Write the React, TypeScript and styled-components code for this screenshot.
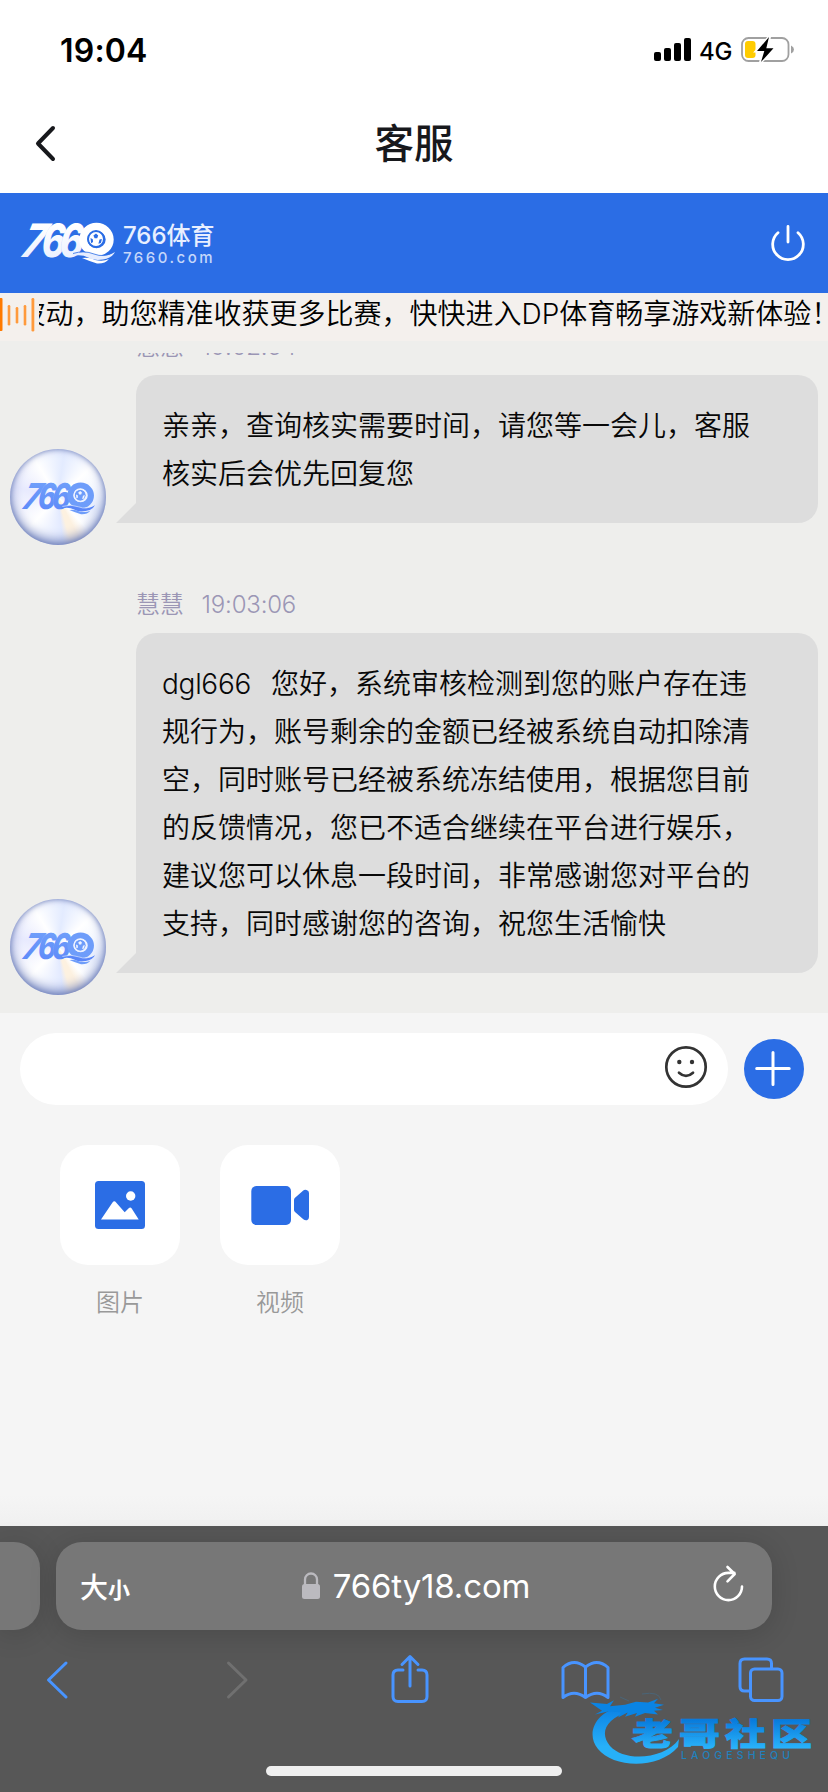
import styled, { createGlobalStyle } from "styled-components";

const noticeText = "波动，助您精准收获更多比赛，快快进入DP体育畅享游戏新体验！";

const messages = [
  {
    id: 1,
    name: "慧慧",
    time: "19:02:54",
    account: "",
    lines: ["亲亲，查询核实需要时间，请您等一会儿，客服", "核实后会优先回复您"],
  },
  {
    id: 2,
    name: "慧慧",
    time: "19:03:06",
    account: "dgl666",
    lines: [
      "您好，系统审核检测到您的账户存在违",
      "规行为，账号剩余的金额已经被系统自动扣除清",
      "空，同时账号已经被系统冻结使用，根据您目前",
      "的反馈情况，您已不适合继续在平台进行娱乐，",
      "建议您可以休息一段时间，非常感谢您对平台的",
      "支持，同时感谢您的咨询，祝您生活愉快",
    ],
  },
];

const BrandMark = ({ id, width, colors, hole }: { id: string; width: number; colors: [string, string]; hole: string }) => (
  <svg width={width} height={(width * 42) / 94} viewBox="0 0 94 42" overflow="visible">
    <defs>
      <linearGradient id={id} x1="0" y1="0" x2="0" y2="1">
        <stop offset="0.2" stopColor={colors[0]} />
        <stop offset="1" stopColor={colors[1]} />
      </linearGradient>
    </defs>
    <g
      fill={`url(#${id})`}
      stroke={hole}
      strokeWidth="0.600"
      strokeOpacity="0.4"
      paintOrder="stroke"
      fontFamily="Inter, sans-serif"
      fontWeight="800"
      fontSize="46"
    >
      <text transform="translate(-3.500 35) skewX(-22) scale(0.84 1)">7</text>
      <text transform="translate(18.500 35) skewX(-11) scale(0.78 1)">6</text>
      <text transform="translate(36.500 35) skewX(-11) scale(0.78 1)">6</text>
    </g>
    <ellipse cx="75.500" cy="17.500" rx="13.200" ry="12.700" fill="none" stroke={colors[0]} strokeWidth="8" />
    <circle cx="75" cy="17" r="7" fill={colors[0]} />
    <path d="M75 11.500l2.200 2-1 2.700h-2.600l-1.200-2.600zM69.500 16l2.300 1.200.3 2.800-2 1.200zM78.500 17.600l2.400-.7-1 4.200-2.500.7z" fill={hole} />
    <circle cx="75" cy="17" r="8.200" fill="none" stroke={hole} strokeWidth="1.400" />
    <path d="M51 32q10-4 22 0t21-2q-3 6-12 7.500t-15-2-16-1.500z" fill={colors[1]} />
    <path d="M61 36q8-1 13 2 8 2 14-1-4 5-12 4.500-8-2.500-15-5.500z" fill={colors[0]} />
    <path d="M52 31.500q11-3.500 21 .5t19-2" fill="none" stroke={hole} strokeWidth="0.800" />
  </svg>
);

const StatusIcons = () => (
  <StatusGroup>
    <svg width="38" height="24" viewBox="0 0 38 24">
      <rect x="0" y="14" width="7" height="9" rx="2" />
      <rect x="10" y="10" width="7" height="13" rx="2" />
      <rect x="20" y="5" width="7" height="18" rx="2" />
      <rect x="30" y="0" width="7" height="23" rx="2" />
    </svg>
    <Network>4G</Network>
    <svg width="54" height="28" viewBox="0 0 54 28">
      <rect x="1" y="2" width="46.500" height="23" rx="6.500" fill="none" stroke="#a0a0a0" strokeWidth="1.800" />
      <path d="M50 9.500q3 1.500 3 4t-3 4z" fill="#a0a0a0" />
      <rect x="4" y="5" width="10.500" height="17" rx="3" fill="#fc0" />
      <path d="M28.500.800L15.500 15h7.300L19.500 26.500 33 12.300h-7.200z" stroke="#fff" strokeWidth="3" />
      <path d="M28 1L16 15h7.300L20 26 32.500 12.300h-7.200z" />
    </svg>
  </StatusGroup>
);

const App = () => (
  <Screen>
    <GlobalStyle />
    <StatusBar>
      <Clock>19:04</Clock>
      <StatusIcons />
    </StatusBar>
    <TitleBar>
      <svg width="40" height="40" viewBox="0 0 40 40" fill="none" stroke="#17181c" strokeWidth="4" strokeLinecap="round" strokeLinejoin="round">
        <path d="M27 4L12 19.500 27 35" />
      </svg>
      <Title>客服</Title>
    </TitleBar>

    <BrandBar>
      <BrandMark id="brandWhite" width={94} colors={["#ffffff", "#e6edff"]} hole="#2b6de5" />
      <BrandNames>
        <BrandName>766体育</BrandName>
        <BrandDomain>7660.com</BrandDomain>
      </BrandNames>
      <svg width="40" height="40" viewBox="0 0 40 40" fill="none" stroke="#fff" strokeWidth="2.800" strokeLinecap="round">
        <path d="M20 3.500V19M10 9.700a15.300 15.300 0 1 0 20 0" />
      </svg>
    </BrandBar>

    <Notice>
      <svg width="39" height="48" viewBox="0 0 39 48" fill="#ff9a3c">
        <rect x="-1" y="5" width="3.500" height="33" rx="1" fill="#ff7a00" />
        <rect x="7.700" y="12" width="2.600" height="20.500" rx="1.300" />
        <rect x="15.700" y="14" width="2.600" height="16.500" rx="1.300" />
        <rect x="23.700" y="12" width="2.600" height="20.500" rx="1.300" />
        <rect x="31.500" y="5" width="2.800" height="33.500" rx="1.300" />
      </svg>
      <NoticeViewport>
        <NoticeText>{noticeText}</NoticeText>
      </NoticeViewport>
    </Notice>

    <ChatArea>
      <MessageList>
        {messages.map((message) => (
          <Message key={message.id}>
            <Avatar>
              <BrandMark id={`brandBlue${message.id}`} width={73} colors={["#6e9dfa", "#5a86f8"]} hole="#eef3ff" />
            </Avatar>
            <MessageBody>
              <Meta>
                <span>{message.name}</span>
                <span>{message.time}</span>
              </Meta>
              <Bubble>
                {message.account && <Account>{message.account}</Account>}
                {message.lines.join("\n")}
              </Bubble>
            </MessageBody>
          </Message>
        ))}
      </MessageList>
    </ChatArea>

    <Composer>
      <InputRow>
        <InputField>
          <svg width="44" height="44" viewBox="0 0 44 44" fill="none" stroke="#333" strokeWidth="2.700" strokeLinecap="round">
            <circle cx="22" cy="22" r="19.700" />
            <path d="M15 27.700q7 6.400 14 0" />
            <circle cx="15.300" cy="17" r="2.200" fill="#333" stroke="none" />
            <circle cx="28" cy="17" r="2.200" fill="#333" stroke="none" />
          </svg>
        </InputField>
        <PlusButton>
          <svg width="60" height="60" viewBox="0 0 60 60" stroke="#fff" strokeWidth="3" strokeLinecap="round">
            <path d="M29 13.500v32M12.700 29.500h32.500" />
          </svg>
        </PlusButton>
      </InputRow>
      <Attachments>
        <Attachment>
          <Tile>
            <svg width="60" height="60" viewBox="0 0 60 60">
              <rect x="5" y="6" width="50" height="48" rx="3.500" fill="#2b6de5" />
              <circle cx="40.700" cy="21" r="4.700" fill="#fff" />
              <path d="M11 44.500l11.500-17q1.800-2.600 3.600 0l8.600 9.800 4-4q1.600-1.600 3 .2l7 11z" fill="#fff" />
            </svg>
          </Tile>
          图片
        </Attachment>
        <Attachment>
          <Tile>
            <svg width="60" height="60" viewBox="0 0 60 60" fill="#2b6de5">
              <rect x="1.300" y="11" width="39.700" height="39" rx="5" />
              <path d="M44 25q0-1.500 1-2.300l8-7q1.500-1.300 3.500-.7 2.500.500 2.500 3v24q0 2.500-2 3.200-2 .500-3.700-1l-8.300-7.300q-1-.900-1-2z" />
            </svg>
          </Tile>
          视频
        </Attachment>
      </Attachments>
    </Composer>

    <Browser>
      <AddressRow>
        <PreviousTab />
        <AddressBar>
          <TextSize>
            大<small>小</small>
          </TextSize>
          <Address>
            <svg width="20" height="30" viewBox="0 0 20 30">
              <path d="M4 14V8.500a6 6 0 0 1 12 0V14" fill="none" stroke="#bbbabf" strokeWidth="2.300" />
              <rect x="1" y="13" width="18" height="15" rx="2.500" fill="#bbbabf" />
            </svg>
            766ty18.com
          </Address>
          <svg width="36" height="40" viewBox="0 0 36 40" fill="none" stroke="#fff" strokeWidth="2.600" strokeLinecap="round" strokeLinejoin="round">
            <path d="M32 22.500A13.600 13.600 0 1 1 18.400 8.900h6M17.500 3l7.200 7-7.200 7.300" />
          </svg>
        </AddressBar>
      </AddressRow>
      <Toolbar>
        <svg width="60" height="60" viewBox="0 0 60 60">
          <path d="M39 14L21.500 31 39 48" />
        </svg>
        <DisabledIcon width="60" height="60" viewBox="0 0 60 60">
          <path d="M25.500 14L43 31 25.500 48" />
        </DisabledIcon>
        <svg width="60" height="60" viewBox="0 0 60 60">
          <path d="M24 21h-5q-5 0-5 5v21.500q0 5 5 5h24q5 0 5-5V26q0-5-5-5h-4M31 37V8M23 15.500L31 7.500l8 8" />
        </svg>
        <svg width="60" height="60" viewBox="0 0 60 60">
          <path d="M30.500 18q-6-4.500-11-4.500-6 0-11.500 5v30q11-8.500 22.500 0 11.500-8.500 22.500 0v-30q-5.500-5-11.500-5-5 0-11 4.500zM30.500 18v30.500" />
        </svg>
        <svg width="60" height="60" viewBox="0 0 60 60">
          <rect x="19.500" y="20" width="31.500" height="31.500" rx="4" />
          <path d="M19 42h-5.500Q9 42 9 37.500v-23Q9 10 13.500 10H36q4.500 0 4.500 4.500v5" />
        </svg>
      </Toolbar>
      <HomeIndicator />
    </Browser>

    <Watermark width="230" height="86" viewBox="0 0 230 86">
      <defs>
        <linearGradient id="markText" x1="0" y1="0" x2="0" y2="1">
          <stop offset="0.250" stopColor="#087bdc" />
          <stop offset="0.900" stopColor="#2ab5fc" />
        </linearGradient>
        <linearGradient id="markRing" x1="0" y1="0" x2="0" y2="1">
          <stop offset="0" stopColor="#0a80e4" />
          <stop offset="0.700" stopColor="#27b0f8" />
        </linearGradient>
      </defs>
      <path d="M33 16C6 21-5 43 8 59c15 19 60 21 80-2l1-8C74 70 34 72 20 56 9 43 16 28 39 22l9-5z" fill="url(#markRing)" />
      <path
        transform="translate(0 8) scale(1 0.75)"
        d="M0 6l17 2 7-5-4 8 15-2 11-4 12 1 10-5-4 6 10 2-9 4 8 3-9 1 4 5-13-2-10 5 2-5-12 5 3-6-10 7 3-7-13-1-13 4 7-5z"
        fill="#0a84e4"
      />
      <path d="M30 7l9 4M52 4q17-3 19 6" stroke="#4a6578" strokeWidth="1" fill="none" />
      <g fill="url(#markText)" stroke="url(#markText)" strokeWidth="0.800" fontFamily="'Noto Sans CJK SC', sans-serif" fontWeight="900" fontSize="31">
        <text transform="translate(42 55) scale(1.320 1)">老</text>
        <text transform="translate(89 55) scale(1.320 1)">哥</text>
        <text transform="translate(135 55) scale(1.320 1)">社</text>
        <text transform="translate(181 55) scale(1.320 1)">区</text>
      </g>
      <text x="91" y="69" fill="#2181bd" fontFamily="Inter, sans-serif" fontSize="10.500" fontWeight="500" textLength="109">
        LAOGESHEQU
      </text>
    </Watermark>
  </Screen>
);

const GlobalStyle = createGlobalStyle`
  * {
    box-sizing: border-box;
  }

  body {
    margin: 0;
    font-family: Inter, "Noto Sans CJK SC", sans-serif;
    text-spacing-trim: space-all;
  }

  svg {
    display: block;
    flex-shrink: 0;
  }
`;

const Screen = styled.div`
  position: relative;
  display: flex;
  flex-direction: column;
  width: 828px;
  height: 1792px;
  overflow: hidden;
  background-color: #fff;
`;

const StatusBar = styled.div`
  display: flex;
  justify-content: space-between;
  align-items: center;
  height: 100px;
  padding: 0 33px 0 60px;
`;

const Clock = styled.div`
  font-size: 32px;
  font-weight: 600;
  letter-spacing: 0.2px;
`;

const StatusGroup = styled.div`
  display: flex;
  align-items: center;
`;

const Network = styled.div`
  width: 49px;
  padding: 2px 0 0 7px;
  font-size: 24px;
  font-weight: 450;
  letter-spacing: -0.3px;
`;

const TitleBar = styled.header`
  display: grid;
  grid-template-columns: 40px 1fr 40px;
  align-items: center;
  height: 93px;
  padding: 0 26px 6px;
`;

const Title = styled.h1`
  margin: 0;
  padding-top: 1px;
  text-align: center;
  font-size: 39.5px;
  font-weight: 500;
  line-height: 56px;
  color: #17181c;
`;

const BrandBar = styled.div`
  display: flex;
  align-items: center;
  height: 100px;
  padding: 0 20px 0 21px;
  background-color: #2b6de5;
`;

const BrandNames = styled.div`
  flex: 1;
  padding: 3px 0 0 8px;
  color: #e8efff;
`;

const BrandName = styled.div`
  font-size: 24px;
  font-weight: 500;
  line-height: 26px;
`;

const BrandDomain = styled.div`
  padding-top: 1px;
  font-size: 15px;
  font-weight: 500;
  line-height: 16px;
  letter-spacing: 2.5px;
  color: #c5d7fa;
`;

const Notice = styled.div`
  display: flex;
  height: 48px;
  background-color: #f4f0ed;
`;

const NoticeViewport = styled.div`
  flex: 1;
  overflow: hidden;
`;

const NoticeText = styled.div`
  margin-left: -21.5px;
  white-space: nowrap;
  font-size: 28px;
  font-weight: 350;
  line-height: 42px;
`;

const ChatArea = styled.main`
  height: 672px;
  padding-top: 12px;
  background-color: #eeeeec;
`;

const MessageList = styled.div`
  display: flex;
  flex-direction: column;
  justify-content: flex-end;
  gap: 42px;
  height: 660px;
  padding: 0 10px 18px;
  overflow: hidden;
`;

const Message = styled.div`
  display: flex;
  align-items: flex-end;
  gap: 30px;
`;

const Avatar = styled.div`
  display: flex;
  justify-content: center;
  align-items: center;
  flex-shrink: 0;
  width: 96px;
  height: 96px;
  padding-top: 2px;
  border-radius: 50%;
  background: conic-gradient(from 8deg, #e3ebff, #fff 40deg, #e9effe 100deg, #fff 130deg, #fdf1e0 145deg, #fdf1e0 156deg, #e3eaff 166deg, #fff 215deg, #e8eafe 275deg, #fff 320deg, #e3ebff);
  box-shadow: inset 0 -4px 12px #7384bd, inset 0 0 5px #8291c6;
`;

const MessageBody = styled.div`
  flex: 1;
  padding-bottom: 22px;
`;

const Meta = styled.div`
  display: flex;
  gap: 18px;
  height: 46px;
  font-size: 24px;
  font-weight: 350;
  line-height: 36px;
  letter-spacing: -0.2px;
  color: #9b96b5;
`;

const Bubble = styled.div`
  position: relative;
  width: 682px;
  padding: 27px 26px 25px;
  border-radius: 20px 20px 20px 0;
  background-color: #ddd;
  font-size: 28px;
  font-weight: 350;
  line-height: 48px;
  color: #080808;
  white-space: pre;

  &::before {
    content: "";
    position: absolute;
    left: -20px;
    bottom: 0;
    border-left: 20px solid transparent;
    border-bottom: 20px solid #ddd;
  }
`;

const Account = styled.span`
  margin-right: 20px;
  letter-spacing: -0.3px;
`;

const Composer = styled.section`
  height: 513px;
  padding: 20px 24px 0 20px;
  background: linear-gradient(#f5f5f5 94%, #f0f0f0);
`;

const InputRow = styled.div`
  display: flex;
  align-items: center;
  gap: 16px;
`;

const InputField = styled.div`
  display: flex;
  justify-content: flex-end;
  flex: 1;
  height: 72px;
  padding: 12px 20px;
  border-radius: 36px;
  background-color: #fff;
`;

const PlusButton = styled.div`
  width: 60px;
  height: 60px;
  border-radius: 50%;
  background-color: #2b6de5;
`;

const Attachments = styled.div`
  display: flex;
  gap: 40px;
  padding: 40px;
`;

const Attachment = styled.div`
  display: flex;
  flex-direction: column;
  align-items: center;
  gap: 20px;
  font-size: 24px;
  font-weight: 350;
  line-height: 36px;
  color: #999;
`;

const Tile = styled.div`
  display: flex;
  justify-content: center;
  align-items: center;
  width: 120px;
  height: 120px;
  border-radius: 28px;
  background-color: #fff;
`;

const Browser = styled.footer`
  display: flex;
  flex-direction: column;
  height: 266px;
  padding-top: 16px;
  background-color: #575757;
`;

const AddressRow = styled.div`
  display: flex;
  gap: 16px;
  height: 88px;
`;

const PreviousTab = styled.div`
  width: 40px;
  border-radius: 0 26px 26px 0;
  background-color: #777;
  box-shadow: 0 4px 28px rgba(0, 0, 0, 0.15);
`;

const AddressBar = styled.div`
  display: grid;
  grid-template-columns: 60px 1fr 60px;
  align-items: center;
  width: 716px;
  padding: 0 24px;
  border-radius: 26px;
  background-color: #777;
  box-shadow: 0 4px 28px rgba(0, 0, 0, 0.15);
  color: #fff;

  > :last-child {
    justify-self: end;
    margin: 0 2px 4px;
  }
`;

const TextSize = styled.div`
  display: flex;
  align-items: baseline;
  font-size: 28px;
  font-weight: 500;

  small {
    font-size: 22px;
    font-weight: 700;
  }
`;

const Address = styled.div`
  display: flex;
  justify-content: center;
  align-items: center;
  gap: 12px;
  padding-left: 3px;
  font-size: 33px;
  letter-spacing: -0.15px;
`;

const Toolbar = styled.nav`
  display: flex;
  justify-content: space-between;
  height: 100px;
  padding: 19px 37px 0 27px;
  fill: none;
  stroke: #4894ff;
  stroke-width: 3;
  stroke-linecap: round;
  stroke-linejoin: round;
`;

const DisabledIcon = styled.svg`
  stroke: #707070;
`;

const HomeIndicator = styled.div`
  width: 296px;
  height: 10px;
  margin: 36px auto 0;
  border-radius: 5px;
  background-color: #efefef;
`;

const Watermark = styled.svg`
  position: absolute;
  left: 590px;
  top: 1690px;
`;

export default App;
